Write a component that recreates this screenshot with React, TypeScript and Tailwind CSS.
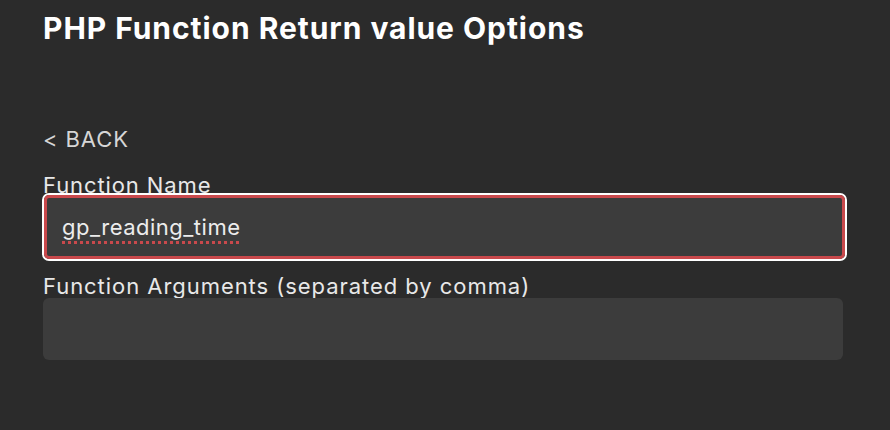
import React from "react";

export default function App() {
  return (
    <div className="w-[890px] h-[430px] bg-[#2b2b2b] overflow-hidden" style={{ fontFamily: "Inter, 'Noto Sans', sans-serif" }}>
      <div className="pl-[43px] pr-[44px]">
        <h1 className="pt-[8px] text-[30px] leading-[40px] font-bold tracking-[0.95px] text-white" style={{ fontFamily: "Inter, 'Open Sans', sans-serif" }}>
          PHP Function Return value Options
        </h1>
        <div className="mt-[78px] text-[22px] leading-[26px] tracking-[0.9px] text-[#d6d6d6]">&lt; BACK</div>
        <div className="mt-[20px] text-[22px] leading-[26px] tracking-[0.9px] text-[#e8e8e8] h-[21px]">Function Name</div>
        <div className="relative w-[805px] h-[68px] rounded-[7px] border-2 border-white -ml-[1px]">
          <div className="h-full rounded-[5px] border-[3px] border-[#c9494c] bg-[#3c3c3c] flex items-center pl-[15px]">
            <span className="text-[22px] tracking-[0.5px] text-[#ececec] underline decoration-dotted decoration-[#c9494c] decoration-[3px] underline-offset-[6px]">
              gp_reading_time
            </span>
          </div>
        </div>
        <div className="mt-[12px] text-[22px] leading-[26px] tracking-[0.95px] text-[#e8e8e8] h-[22px]">Function Arguments (separated by comma)</div>
        <div className="relative mt-[3px] w-[800px] h-[62px] rounded-[6px] bg-[#3c3c3c]" />
      </div>
    </div>
  );
}
